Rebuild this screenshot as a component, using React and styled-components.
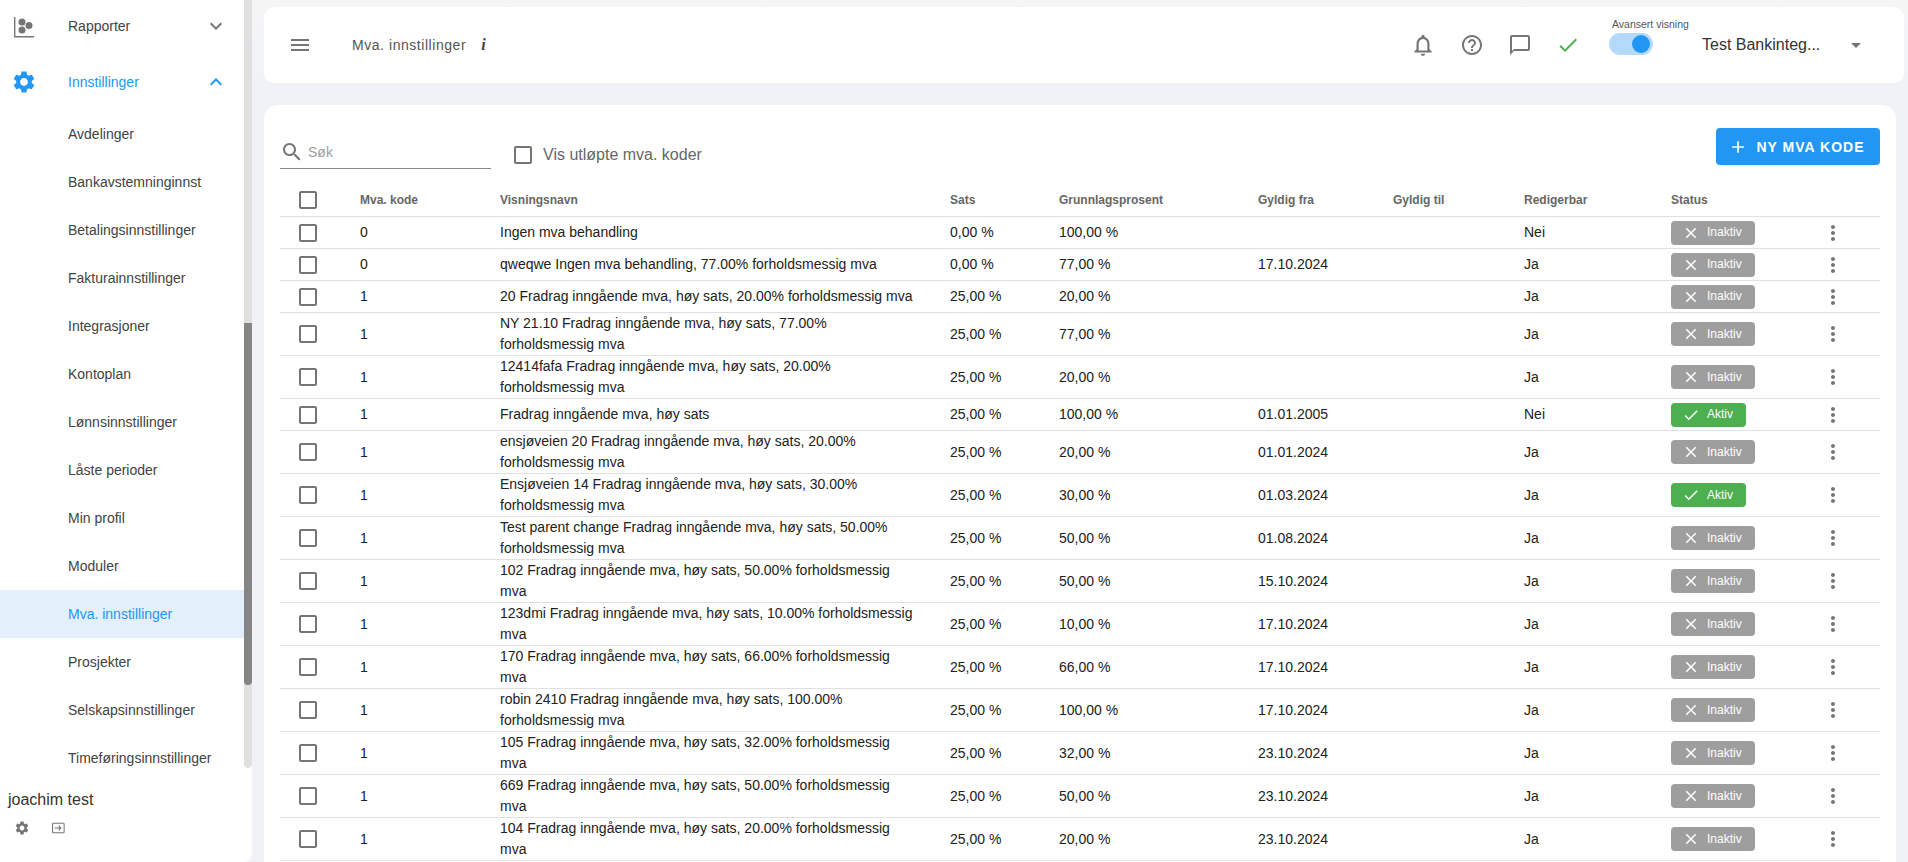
import React from 'react';
import styled, { createGlobalStyle } from 'styled-components';

const FONT = '"Liberation Sans", Arial, sans-serif';

const GlobalStyle = createGlobalStyle`
	html, body {
		margin: 0;
		padding: 0;
		overflow: hidden;
		background: #f0f2f7;
		font-family: ${FONT};
	}
`;

const PATHS = {
	menu: 'M3 18h18v-2H3v2zm0-5h18v-2H3v2zm0-7v2h18V6H3z',
	settings: 'M19.14 12.94c.04-.3.06-.61.06-.94 0-.32-.02-.64-.07-.94l2.03-1.58c.18-.14.23-.41.12-.61l-1.92-3.32c-.12-.22-.37-.29-.59-.22l-2.39.96c-.5-.38-1.03-.7-1.62-.94l-.36-2.54c-.04-.24-.24-.41-.48-.41h-3.84c-.24 0-.43.17-.47.41l-.36 2.54c-.59.24-1.13.57-1.62.94l-2.39-.96c-.22-.08-.47 0-.59.22L2.74 8.87c-.12.21-.08.47.12.61l2.03 1.58c-.05.3-.09.63-.09.94s.02.64.07.94l-2.03 1.58c-.18.14-.23.41-.12.61l1.92 3.32c.12.22.37.29.59.22l2.39-.96c.5.38 1.03.7 1.62.94l.36 2.54c.05.24.24.41.48.41h3.84c.24 0 .44-.17.47-.41l.36-2.54c.59-.24 1.13-.56 1.62-.94l2.39.96c.22.08.47 0 .59-.22l1.92-3.32c.12-.22.07-.47-.12-.61l-2.01-1.58zM12 15.6c-1.98 0-3.6-1.62-3.6-3.6s1.62-3.6 3.6-3.6 3.6 1.62 3.6 3.6-1.62 3.6-3.6 3.6z',
	expandMore: 'M16.59 8.59L12 13.17 7.41 8.59 6 10l6 6 6-6z',
	expandLess: 'M12 8l-6 6 1.41 1.41L12 10.83l4.59 4.58L18 14z',
	bell: 'M12 22c1.1 0 2-.9 2-2h-4c0 1.1.9 2 2 2zm6-6v-5c0-3.07-1.63-5.64-4.5-6.32V4c0-.83-.67-1.5-1.5-1.5s-1.5.67-1.5 1.5v.68C7.64 5.36 6 7.92 6 11v5l-2 2v1h16v-1l-2-2zm-2 1H8v-6c0-2.48 1.51-4.5 4-4.5s4 2.02 4 4.5v6z',
	help: 'M11 18h2v-2h-2v2zm1-16C6.48 2 2 6.48 2 12s4.48 10 10 10 10-4.48 10-10S17.52 2 12 2zm0 18c-4.41 0-8-3.59-8-8s3.59-8 8-8 8 3.59 8 8-3.59 8-8 8zm0-14c-2.21 0-4 1.79-4 4h2c0-1.1.9-2 2-2s2 .9 2 2c0 2-3 1.75-3 5h2c0-2.25 3-2.5 3-5 0-2.21-1.79-4-4-4z',
	chat: 'M20 2H4c-1.1 0-2 .9-2 2v18l4-4h14c1.1 0 2-.9 2-2V4c0-1.1-.9-2-2-2zm0 14H6l-2 2V4h16v12z',
	check: 'M9 16.17L4.83 12l-1.42 1.41L9 19 21 7l-1.41-1.41z',
	close: 'M19 6.41L17.59 5 12 10.59 6.41 5 5 6.41 10.59 12 5 17.59 6.41 19 12 13.41 17.59 19 19 17.59 13.41 12z',
	add: 'M19 13h-6v6h-2v-6H5v-2h6V5h2v6h6v2z',
	search: 'M15.5 14h-.79l-.28-.27C15.41 12.59 16 11.11 16 9.5 16 5.91 13.09 3 9.5 3S3 5.91 3 9.5 5.91 16 9.5 16c1.61 0 3.09-.59 4.23-1.57l.27.28v.79l5 4.99L20.49 19l-4.99-5zm-6 0C7.01 14 5 11.99 5 9.5S7.01 5 9.5 5 14 7.01 14 9.5 11.99 14 9.5 14z',
	more: 'M12 8c1.1 0 2-.9 2-2s-.9-2-2-2-2 .9-2 2 .9 2 2 2zm0 2c-1.1 0-2 .9-2 2s.9 2 2 2 2-.9 2-2-.9-2-2-2zm0 6c-1.1 0-2 .9-2 2s.9 2 2 2 2-.9 2-2-.9-2-2-2z',
	box: 'M19 5v14H5V5h14m0-2H5c-1.1 0-2 .9-2 2v14c0 1.1.9 2 2 2h14c1.1 0 2-.9 2-2V5c0-1.1-.9-2-2-2z',
	caret: 'M7 10l5 5 5-5z',
	logout: 'M5 4h15c1.1 0 2 .9 2 2v12c0 1.1-.9 2-2 2H5c-1.1 0-2-.9-2-2V6c0-1.1.9-2 2-2zm0 1.6c-.2 0-.4.2-.4.4v12c0 .2.2.4.4.4h15c.2 0 .4-.2.4-.4V6c0-.2-.2-.4-.4-.4zM13.5 8l4 4-4 4-1.1-1.1 2.1-2.1H7v-1.6h7.5l-2.1-2.1z',
};

const Glyph = ({ name, size = 24, color = '#757575' }) => (
	<svg width={size} height={size} viewBox="0 0 24 24" fill={color} style={{ display: 'block', flex: 'none' }}>
		<path d={PATHS[name]} />
	</svg>
);

const ReportIcon = () => (
	<svg width="26" height="26" viewBox="0 0 26 26" fill="#757575" style={{ display: 'block', flex: 'none' }}>
		<path d="M3 4h1.4v19H23v1.4H3z" />
		<circle cx="11" cy="9" r="3.5" />
		<circle cx="18" cy="12.5" r="3.5" />
		<circle cx="11" cy="17" r="3.5" />
	</svg>
);

const Page = styled.div`
	display: flex;
	width: 1908px;
	height: 862px;
	overflow: hidden;
	background: linear-gradient(#f5f5f6, #f0f2f7 100px);
`;

const Sidebar = styled.aside`
	flex: none;
	width: 252px;
	height: 862px;
	display: flex;
	flex-direction: column;
	background: #fff;
	border-bottom-right-radius: 8px;
`;

const NavArea = styled.div`
	display: flex;
	height: 768px;
	flex: none;
`;

const NavList = styled.nav`
	flex: 1;
	min-width: 0;
	padding-top: 2px;
`;

const Track = styled.div`
	flex: none;
	width: 8px;
	background: #e0e0e0;
	border-radius: 0 0 4px 4px;
	padding-top: 323px;
`;

const Thumb = styled.div`
	height: 362px;
	background: #858585;
	border-radius: 0 0 4px 4px;
`;

const NavGroup = styled.div`
	height: 56px;
	display: flex;
	align-items: center;
	padding: 0 16px 0 11px;
	margin-top: ${p => (p.$first ? '-4px' : '0')};
	color: ${p => (p.$active ? '#2196f3' : '#424242')};
	font-size: 14px;
`;

const NavLabel = styled.span`
	flex: 1;
	padding-left: 31px;
`;

const SubItem = styled.div`
	height: 48px;
	display: flex;
	align-items: center;
	padding-left: 68px;
	font-size: 14px;
	color: ${p => (p.$active ? '#2196f3' : '#424242')};
	background: ${p => (p.$active ? '#e3f0fb' : 'transparent')};
`;

const UserBlock = styled.div`
	padding: 21px 8px 0;
`;

const UserName = styled.div`
	font-size: 16px;
	line-height: 22px;
	color: #333;
`;

const UserActions = styled.div`
	display: flex;
	align-items: center;
	gap: 20px;
	padding: 9px 0 0 6px;
`;

const Content = styled.main`
	flex: 1;
	min-width: 0;
	padding: 7px 4px 0 12px;
	display: flex;
	flex-direction: column;
	gap: 22px;
`;

const TopBar = styled.header`
	flex: none;
	height: 76px;
	background: #fff;
	border-radius: 10px;
	display: flex;
	align-items: center;
	padding: 0 36px 0 24px;
`;

const Title = styled.span`
	margin-left: 40px;
	font-size: 14px;
	letter-spacing: 0.55px;
	color: #555;
`;

const InfoMark = styled.span`
	margin-left: 15px;
	font: italic 700 16px "Liberation Serif", serif;
	color: #444;
`;

const TopRight = styled.div`
	margin-left: auto;
	display: flex;
	align-items: center;
	gap: 24px;
`;

const ToggleBox = styled.div`
	position: relative;
	width: 44px;
	height: 22px;
	margin-left: 5px;
	margin-top: -3px;
	border-radius: 11px;
	background: #b5daf9;
`;

const ToggleThumb = styled.div`
	position: absolute;
	top: 2px;
	right: 3px;
	width: 18px;
	height: 18px;
	border-radius: 50%;
	background: #2196f3;
`;

const ToggleLabel = styled.span`
	position: absolute;
	top: -15px;
	left: 3px;
	white-space: nowrap;
	font-size: 10.5px;
	line-height: 12px;
	color: #555;
`;

const CompanyPicker = styled.div`
	display: flex;
	align-items: center;
	margin-left: 25px;
	font-size: 16px;
	color: #333;
`;

const CompanyName = styled.span`
	width: 142px;
`;

const Panel = styled.section`
	flex: 1;
	margin-right: 8px;
	background: #fff;
	border-radius: 14px 14px 0 0;
	padding: 23px 16px 0;
`;

const Toolbar = styled.div`
	display: flex;
	align-items: flex-start;
	height: 60px;
`;

const SearchField = styled.div`
	width: 211px;
	height: 41px;
	display: flex;
	align-items: center;
	gap: 4px;
	padding-top: 8px;
	box-sizing: border-box;
	border-bottom: 1px solid #8a8a8a;
	font-size: 14px;
	color: #9e9e9e;
`;

const ExpiredToggle = styled.label`
	display: flex;
	align-items: center;
	gap: 8px;
	margin: 6px 0 0 20px;
	height: 42px;
	font-size: 16px;
	color: #666;
`;

const AddButton = styled.button`
	margin-left: auto;
	width: 164px;
	height: 37px;
	display: flex;
	align-items: center;
	justify-content: center;
	gap: 9px;
	padding: 0 4px 0 0;
	border: 0;
	border-radius: 4px;
	background: #2196f3;
	color: #fff;
	font-family: ${FONT};
	font-size: 14px;
	font-weight: 700;
	letter-spacing: 1px;
`;

const Table = styled.table`
	width: 1600px;
	table-layout: fixed;
	border-collapse: separate;
	border-spacing: 0;
`;

const HeadCell = styled.th`
	height: 22px;
	padding: 0 0 4px;
	text-align: left;
	font-size: 12px;
	font-weight: 700;
	color: #666;
	border-bottom: 1px solid #e0e0e0;
`;

const Cell = styled.td`
	height: 31px;
	padding: 0;
	font-size: 14px;
	line-height: 21px;
	color: #212121;
	border-bottom: 1px solid #e0e0e0;
`;

const NameCell = styled(Cell)`
	padding-right: 32px;
`;

const BoxWrap = styled.div`
	padding-left: 16px;
`;

const Chip = styled.span`
	display: inline-flex;
	align-items: center;
	vertical-align: middle;
	height: 24px;
	width: ${p => (p.$on ? '75px' : '84px')};
	box-sizing: border-box;
	padding-left: 11px;
	gap: 7px;
	border-radius: 4px;
	background: ${p => (p.$on ? '#4caf50' : '#9e9e9e')};
	color: #fff;
	font-size: 12px;
`;

const MoreWrap = styled.div`
	padding-left: 4px;
`;

const widths = [80, 140, 450, 109, 199, 135, 131, 147, 146, 63];
const heads = ['Mva. kode', 'Visningsnavn', 'Sats', 'Grunnlagsprosent', 'Gyldig fra', 'Gyldig til', 'Redigerbar', 'Status'];

const rows = [
	['0', 'Ingen mva behandling', '0,00 %', '100,00 %', '', 'Nei', false],
	['0', 'qweqwe Ingen mva behandling, 77.00% forholdsmessig mva', '0,00 %', '77,00 %', '17.10.2024', 'Ja', false],
	['1', '20 Fradrag inngående mva, høy sats, 20.00% forholdsmessig mva', '25,00 %', '20,00 %', '', 'Ja', false],
	['1', 'NY 21.10 Fradrag inngående mva, høy sats, 77.00% forholdsmessig mva', '25,00 %', '77,00 %', '', 'Ja', false],
	['1', '12414fafa Fradrag inngående mva, høy sats, 20.00% forholdsmessig mva', '25,00 %', '20,00 %', '', 'Ja', false],
	['1', 'Fradrag inngående mva, høy sats', '25,00 %', '100,00 %', '01.01.2005', 'Nei', true],
	['1', 'ensjøveien 20 Fradrag inngående mva, høy sats, 20.00% forholdsmessig mva', '25,00 %', '20,00 %', '01.01.2024', 'Ja', false],
	['1', 'Ensjøveien 14 Fradrag inngående mva, høy sats, 30.00% forholdsmessig mva', '25,00 %', '30,00 %', '01.03.2024', 'Ja', true],
	['1', 'Test parent change Fradrag inngående mva, høy sats, 50.00% forholdsmessig mva', '25,00 %', '50,00 %', '01.08.2024', 'Ja', false],
	['1', '102 Fradrag inngående mva, høy sats, 50.00% forholdsmessig mva', '25,00 %', '50,00 %', '15.10.2024', 'Ja', false],
	['1', '123dmi Fradrag inngående mva, høy sats, 10.00% forholdsmessig mva', '25,00 %', '10,00 %', '17.10.2024', 'Ja', false],
	['1', '170 Fradrag inngående mva, høy sats, 66.00% forholdsmessig mva', '25,00 %', '66,00 %', '17.10.2024', 'Ja', false],
	['1', 'robin 2410 Fradrag inngående mva, høy sats, 100.00% forholdsmessig mva', '25,00 %', '100,00 %', '17.10.2024', 'Ja', false],
	['1', '105 Fradrag inngående mva, høy sats, 32.00% forholdsmessig mva', '25,00 %', '32,00 %', '23.10.2024', 'Ja', false],
	['1', '669 Fradrag inngående mva, høy sats, 50.00% forholdsmessig mva', '25,00 %', '50,00 %', '23.10.2024', 'Ja', false],
	['1', '104 Fradrag inngående mva, høy sats, 20.00% forholdsmessig mva', '25,00 %', '20,00 %', '23.10.2024', 'Ja', false],
];

const subItems = ['Avdelinger', 'Bankavstemninginnst', 'Betalingsinnstillinger', 'Fakturainnstillinger', 'Integrasjoner', 'Kontoplan', 'Lønnsinnstillinger', 'Låste perioder', 'Min profil', 'Moduler', 'Mva. innstillinger', 'Prosjekter', 'Selskapsinnstillinger', 'Timeføringsinnstillinger'];

export default function App() {
	return (
		<Page>
			<GlobalStyle />
			<Sidebar>
				<NavArea>
					<NavList>
						<NavGroup $first>
							<ReportIcon />
							<NavLabel>Rapporter</NavLabel>
							<Glyph name="expandMore" />
						</NavGroup>
						<NavGroup $active>
							<Glyph name="settings" size={26} color="#2196f3" />
							<NavLabel>Innstillinger</NavLabel>
							<Glyph name="expandLess" color="#2196f3" />
						</NavGroup>
						{subItems.map(item => (
							<SubItem key={item} $active={item === 'Mva. innstillinger'}>{item}</SubItem>
						))}
					</NavList>
					<Track><Thumb /></Track>
				</NavArea>
				<UserBlock>
					<UserName>joachim test</UserName>
					<UserActions>
						<Glyph name="settings" size={16} />
						<Glyph name="logout" size={16} />
					</UserActions>
				</UserBlock>
			</Sidebar>
			<Content>
				<TopBar>
					<Glyph name="menu" />
					<Title>Mva. innstillinger</Title>
					<InfoMark>i</InfoMark>
					<TopRight>
						<Glyph name="bell" size={26} />
						<Glyph name="help" />
						<Glyph name="chat" />
						<Glyph name="check" color="#4caf50" />
						<ToggleBox>
							<ToggleLabel>Avansert visning</ToggleLabel>
							<ToggleThumb />
						</ToggleBox>
						<CompanyPicker>
							<CompanyName>Test Bankinteg...</CompanyName>
							<Glyph name="caret" />
						</CompanyPicker>
					</TopRight>
				</TopBar>
				<Panel>
					<Toolbar>
						<SearchField>
							<Glyph name="search" />
							Søk
						</SearchField>
						<ExpiredToggle>
							<Glyph name="box" />
							Vis utløpte mva. koder
						</ExpiredToggle>
						<AddButton>
							<Glyph name="add" size={20} color="#fff" />
							NY MVA KODE
						</AddButton>
					</Toolbar>
					<Table>
						<colgroup>
							{widths.map((w, i) => <col key={i} width={w} />)}
						</colgroup>
						<thead>
							<tr>
								<HeadCell><BoxWrap><Glyph name="box" /></BoxWrap></HeadCell>
								{heads.map(h => <HeadCell key={h}>{h}</HeadCell>)}
								<HeadCell />
							</tr>
						</thead>
						<tbody>
							{rows.map(([code, name, rate, base, from, editable, on], i) => (
								<tr key={i}>
									<Cell><BoxWrap><Glyph name="box" /></BoxWrap></Cell>
									<Cell>{code}</Cell>
									<NameCell>{name}</NameCell>
									<Cell>{rate}</Cell>
									<Cell>{base}</Cell>
									<Cell>{from}</Cell>
									<Cell />
									<Cell>{editable}</Cell>
									<Cell>
										<Chip $on={on}>
											<Glyph name={on ? 'check' : 'close'} size={18} color="#fff" />
											{on ? 'Aktiv' : 'Inaktiv'}
										</Chip>
									</Cell>
									<Cell><MoreWrap><Glyph name="more" /></MoreWrap></Cell>
								</tr>
							))}
						</tbody>
					</Table>
				</Panel>
			</Content>
		</Page>
	);
}
